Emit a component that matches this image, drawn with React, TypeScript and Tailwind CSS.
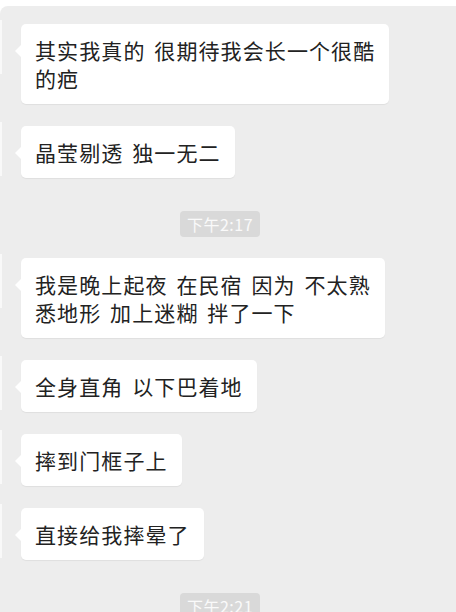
import React from 'react';

type Item =
  | { kind: 'msg'; lines: string[] }
  | { kind: 'time'; text: string };

const items: Item[] = [
  { kind: 'msg', lines: ['其实我真的 很期待我会长一个很酷', '的疤'] },
  { kind: 'msg', lines: ['晶莹剔透 独一无二'] },
  { kind: 'time', text: '下午2:17' },
  { kind: 'msg', lines: ['我是晚上起夜 在民宿 因为 不太熟', '悉地形 加上迷糊 拌了一下'] },
  { kind: 'msg', lines: ['全身直角 以下巴着地'] },
  { kind: 'msg', lines: ['摔到门框子上'] },
  { kind: 'msg', lines: ['直接给我摔晕了'] },
  { kind: 'time', text: '下午2:21' },
];

const Bubble: React.FC<{ lines: string[] }> = ({ lines }) => (
  <div className="flex items-start">
    {/* avatar edge peeking in from the left */}
    <div className="w-[2px] h-[54px] -mt-[4px] bg-[#f9f9f9]" />
    <div className="relative ml-[19px] bg-white rounded-[5px] px-[14px] py-[12px] shadow-[0_1px_1px_rgba(0,0,0,0.06)]">
      <span className="absolute -left-[6px] top-[21px] w-0 h-0 border-y-[6px] border-y-transparent border-r-[6px] border-r-white" />
      {lines.map((l, i) => (
        <div key={i} className="text-[21px] leading-[28px] text-[#222] whitespace-pre tracking-[1.1px] [word-spacing:3px]">
          {l}
        </div>
      ))}
    </div>
  </div>
);

const Stamp: React.FC<{ text: string }> = ({ text }) => (
  <div className="flex justify-center pr-[16px] mt-[11px] mb-[-1px]">
    <span className="h-[26px] px-[7px] rounded-[4px] bg-[#d9d9d9] text-[#fafafa] text-[16px] leading-[26px] tracking-[0.5px]">
      {text}
    </span>
  </div>
);

export default function App() {
  return (
    <div
      className="w-[456px] h-[612px] overflow-hidden bg-white pt-[6px]"
      style={{ fontFamily: '"Noto Sans CJK SC", "Noto Sans", sans-serif' }}
    >
      <div className="h-full bg-[#ededed] rounded-tl-[8px] pt-[18px] flex flex-col gap-[22px]">
        {items.map((it, i) =>
          it.kind === 'msg' ? <Bubble key={i} lines={it.lines} /> : <Stamp key={i} text={it.text} />
        )}
      </div>
    </div>
  );
}
